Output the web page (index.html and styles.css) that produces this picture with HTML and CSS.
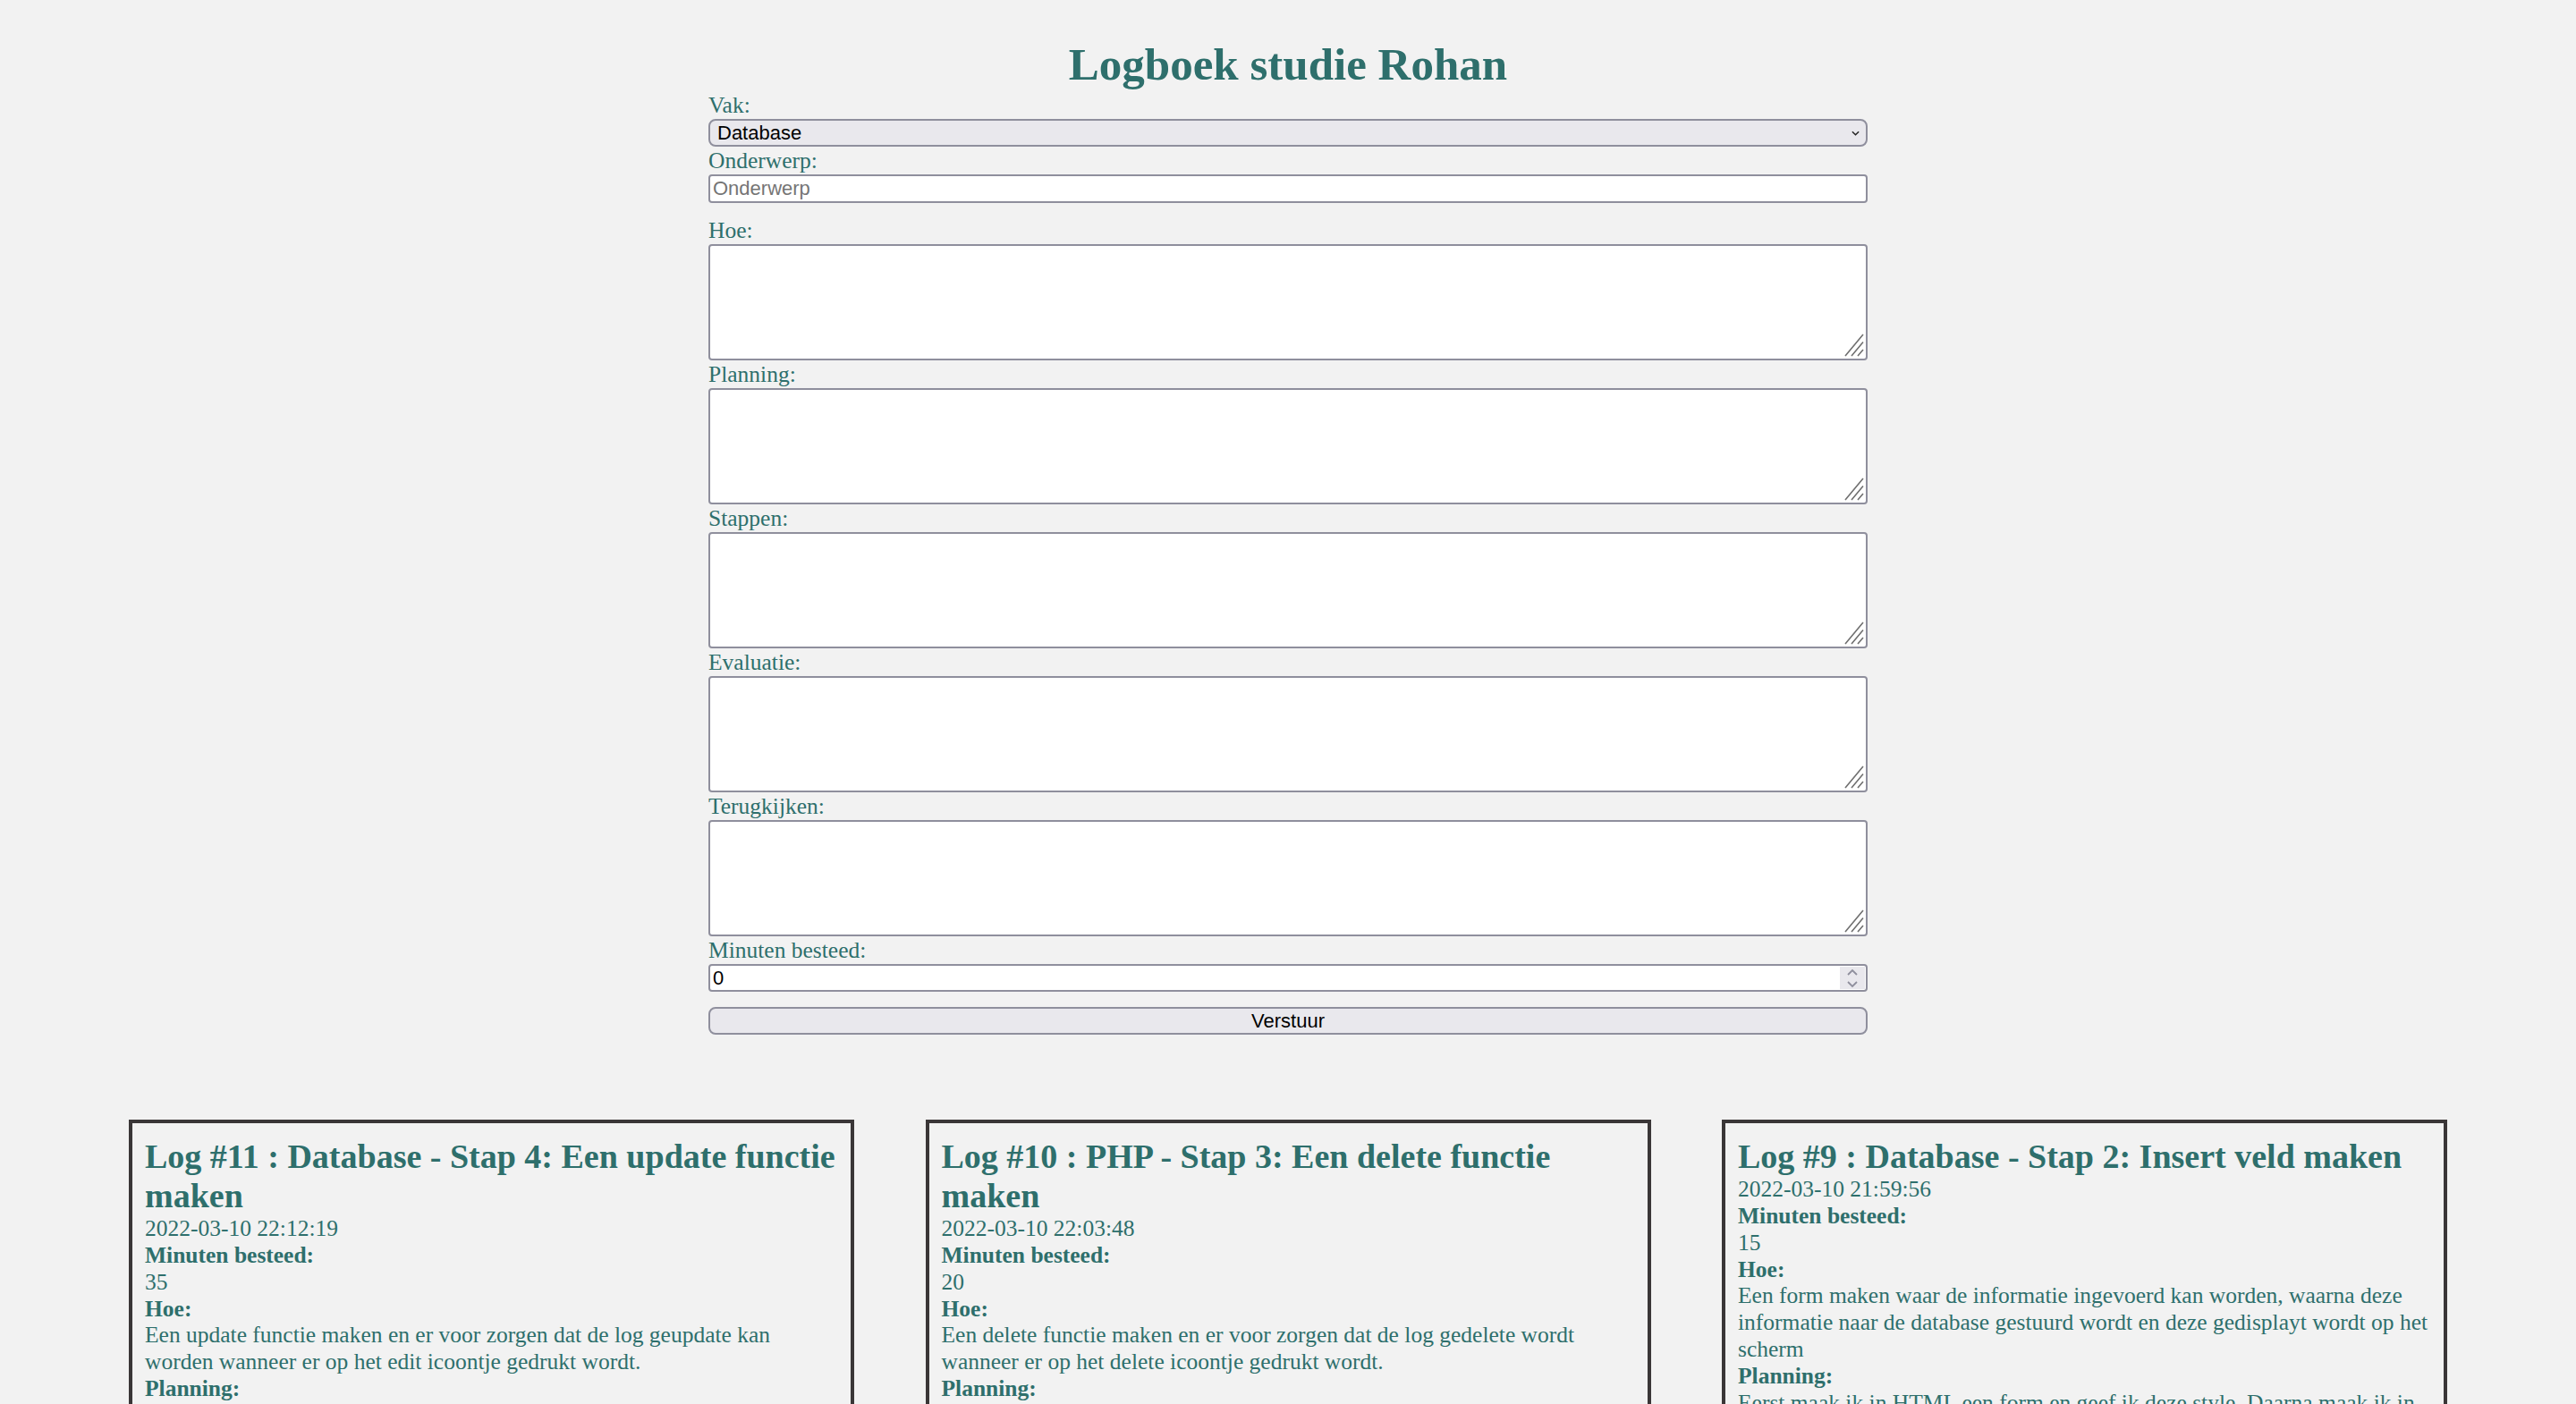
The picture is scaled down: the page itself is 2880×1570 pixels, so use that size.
FILE: index.html
```html
<!DOCTYPE html>
<html lang="nl">
<head>
<meta charset="utf-8">
<title>Logboek studie Rohan</title>
<link rel="stylesheet" href="styles.css">
</head>
<body>
<h1 class="title">Logboek studie Rohan</h1>
<form class="log-form">
  <label class="field-label" for="vak">Vak:</label>
  <div class="select-wrap">
    <select id="vak" class="select">
      <option>Database</option>
      <option>PHP</option>
    </select>
    <svg class="select-chevron" width="10" height="6" viewBox="0 0 10 6"><path d="M1 1 L5 5 L9 1" fill="none" stroke="#222" stroke-width="1.6"/></svg>
  </div>
  <label class="field-label" for="onderwerp">Onderwerp:</label>
  <input id="onderwerp" class="text-input" type="text" placeholder="Onderwerp">

  <label class="field-label field-label--spaced" for="hoe">Hoe:</label>
  <div class="area-wrap"><textarea id="hoe" class="area"></textarea><svg class="grip" width="24" height="26" viewBox="0 0 24 26"><path d="M2 25 L22 1 M9 25 L22 9.5 M16 25 L22 18" stroke="#6f6f6f" stroke-width="1.6" fill="none"/></svg></div>

  <label class="field-label" for="planning">Planning:</label>
  <div class="area-wrap"><textarea id="planning" class="area"></textarea><svg class="grip" width="24" height="26" viewBox="0 0 24 26"><path d="M2 25 L22 1 M9 25 L22 9.5 M16 25 L22 18" stroke="#6f6f6f" stroke-width="1.6" fill="none"/></svg></div>

  <label class="field-label" for="stappen">Stappen:</label>
  <div class="area-wrap"><textarea id="stappen" class="area"></textarea><svg class="grip" width="24" height="26" viewBox="0 0 24 26"><path d="M2 25 L22 1 M9 25 L22 9.5 M16 25 L22 18" stroke="#6f6f6f" stroke-width="1.6" fill="none"/></svg></div>

  <label class="field-label" for="evaluatie">Evaluatie:</label>
  <div class="area-wrap"><textarea id="evaluatie" class="area"></textarea><svg class="grip" width="24" height="26" viewBox="0 0 24 26"><path d="M2 25 L22 1 M9 25 L22 9.5 M16 25 L22 18" stroke="#6f6f6f" stroke-width="1.6" fill="none"/></svg></div>

  <label class="field-label" for="terugkijken">Terugkijken:</label>
  <div class="area-wrap"><textarea id="terugkijken" class="area"></textarea><svg class="grip" width="24" height="26" viewBox="0 0 24 26"><path d="M2 25 L22 1 M9 25 L22 9.5 M16 25 L22 18" stroke="#6f6f6f" stroke-width="1.6" fill="none"/></svg></div>

  <label class="field-label" for="minuten">Minuten besteed:</label>
  <div class="number-wrap">
    <input id="minuten" class="text-input number-input" type="number" value="0">
    <span class="spinner"><svg width="14" height="22" viewBox="0 0 14 22"><path d="M2 7 L7 2 L12 7 M2 15 L7 20 L12 15" fill="none" stroke="#8f8f9d" stroke-width="1.8"/></svg></span>
  </div>
  <button type="button" class="submit">Verstuur</button>
</form>

<main class="logs">
  <article class="log-card">
    <h2 class="log-title">Log #11 : Database - Stap 4: Een update functie maken</h2>
    <div class="line">2022-03-10 22:12:19</div>
    <div class="line"><strong>Minuten besteed:</strong></div>
    <div class="line">35</div>
    <div class="line"><strong>Hoe:</strong></div>
    <p class="text">Een update functie maken en er voor zorgen dat de log geupdate kan worden wanneer er op het edit icoontje gedrukt wordt.</p>
    <div class="line"><strong>Planning:</strong></div>
    <p class="text">Eerst maak ik een update pagina en daarna zorg ik dat de informatie uit de database in het form komt te staan.</p>
  </article>
  <article class="log-card">
    <h2 class="log-title">Log #10 : PHP - Stap 3: Een delete functie maken</h2>
    <div class="line">2022-03-10 22:03:48</div>
    <div class="line"><strong>Minuten besteed:</strong></div>
    <div class="line">20</div>
    <div class="line"><strong>Hoe:</strong></div>
    <p class="text">Een delete functie maken en er voor zorgen dat de log gedelete wordt wanneer er op het delete icoontje gedrukt wordt.</p>
    <div class="line"><strong>Planning:</strong></div>
    <p class="text">Eerst maak ik een delete pagina en daarna zorg ik dat de log uit de database verwijderd wordt.</p>
  </article>
  <article class="log-card">
    <h2 class="log-title">Log #9 : Database - Stap 2: Insert veld maken</h2>
    <div class="line">2022-03-10 21:59:56</div>
    <div class="line"><strong>Minuten besteed:</strong></div>
    <div class="line">15</div>
    <div class="line"><strong>Hoe:</strong></div>
    <p class="text">Een form maken waar de informatie ingevoerd kan worden, waarna deze informatie naar de database gestuurd wordt en deze gedisplayt wordt op het scherm</p>
    <div class="line"><strong>Planning:</strong></div>
    <p class="text">Eerst maak ik in HTML een form en geef ik deze style. Daarna maak ik in PHP de code om de informatie naar de database te sturen.</p>
  </article>
</main>
</body>
</html>
```

FILE: styles.css
```css
html {
  scrollbar-width: none;
}

body {
  margin: 0;
  background: #f2f2f2;
  color: #2e6f6c;
  font-family: "Liberation Serif", "Times New Roman", serif;
  font-size: 25.5px;
}

.title {
  margin: 42px 0 0;
  font-size: 51px;
  line-height: 60px;
  font-weight: bold;
  text-align: center;
}

.log-form {
  width: 1296px;
  margin: 0 auto;
  display: flex;
  flex-direction: column;
}

.field-label {
  display: block;
  line-height: 31px;
}

.field-label--spaced {
  margin-top: 15px;
}

.select-wrap,
.area-wrap,
.number-wrap {
  position: relative;
}

.select {
  display: block;
  width: 100%;
  height: 31px;
  margin: 0;
  padding: 0 8px;
  box-sizing: border-box;
  appearance: none;
  -webkit-appearance: none;
  background: #e9e8ed;
  border: 2px solid #8f8f9d;
  border-radius: 8px;
  font-family: "Liberation Sans", Arial, sans-serif;
  font-size: 22px;
  color: #000;
}

.select-chevron {
  position: absolute;
  right: 9px;
  top: 13px;
  width: 9px;
  height: 6px;
}

.text-input {
  display: block;
  width: 100%;
  height: 32px;
  margin: 0;
  padding: 0 3px;
  box-sizing: border-box;
  background: #fff;
  border: 2px solid #8f8f9d;
  border-radius: 4px;
  font-family: "Liberation Sans", Arial, sans-serif;
  font-size: 22px;
  color: #000;
  outline: none;
}

.text-input::placeholder {
  color: #757575;
}

.area {
  display: block;
  width: 100%;
  height: 130px;
  margin: 0;
  padding: 4px;
  box-sizing: border-box;
  background: #fff;
  border: 2px solid #8f8f9d;
  border-radius: 4px;
  resize: none;
  font-family: "Liberation Mono", monospace;
  font-size: 22px;
}

.grip {
  position: absolute;
  right: 3px;
  bottom: 4px;
}

.number-input {
  height: 31px;
  -moz-appearance: textfield;
  appearance: textfield;
}

.number-input::-webkit-outer-spin-button,
.number-input::-webkit-inner-spin-button {
  -webkit-appearance: none;
  margin: 0;
}

.spinner {
  position: absolute;
  right: 3px;
  top: 3px;
  width: 28px;
  height: 25px;
  background: #e9e8ed;
  display: flex;
  align-items: center;
  justify-content: center;
}

.submit {
  display: block;
  width: 100%;
  height: 31px;
  margin: 17px 0 0;
  padding: 0;
  background: #e9e8ed;
  border: 2px solid #8f8f9d;
  border-radius: 8px;
  font-family: "Liberation Sans", Arial, sans-serif;
  font-size: 22px;
  color: #000;
}

.logs {
  display: flex;
  justify-content: space-between;
  align-items: flex-start;
  padding: 0 144px;
  margin-top: 95px;
}

.log-card {
  width: 811px;
  box-sizing: border-box;
  border: 4px solid #3a3637;
  padding: 15px 14px;
  line-height: 29.85px;
}

.log-title {
  margin: 0;
  font-size: 38px;
  line-height: 44px;
  font-weight: bold;
}

.line {
  display: block;
}

.text {
  margin: 0;
}
```
